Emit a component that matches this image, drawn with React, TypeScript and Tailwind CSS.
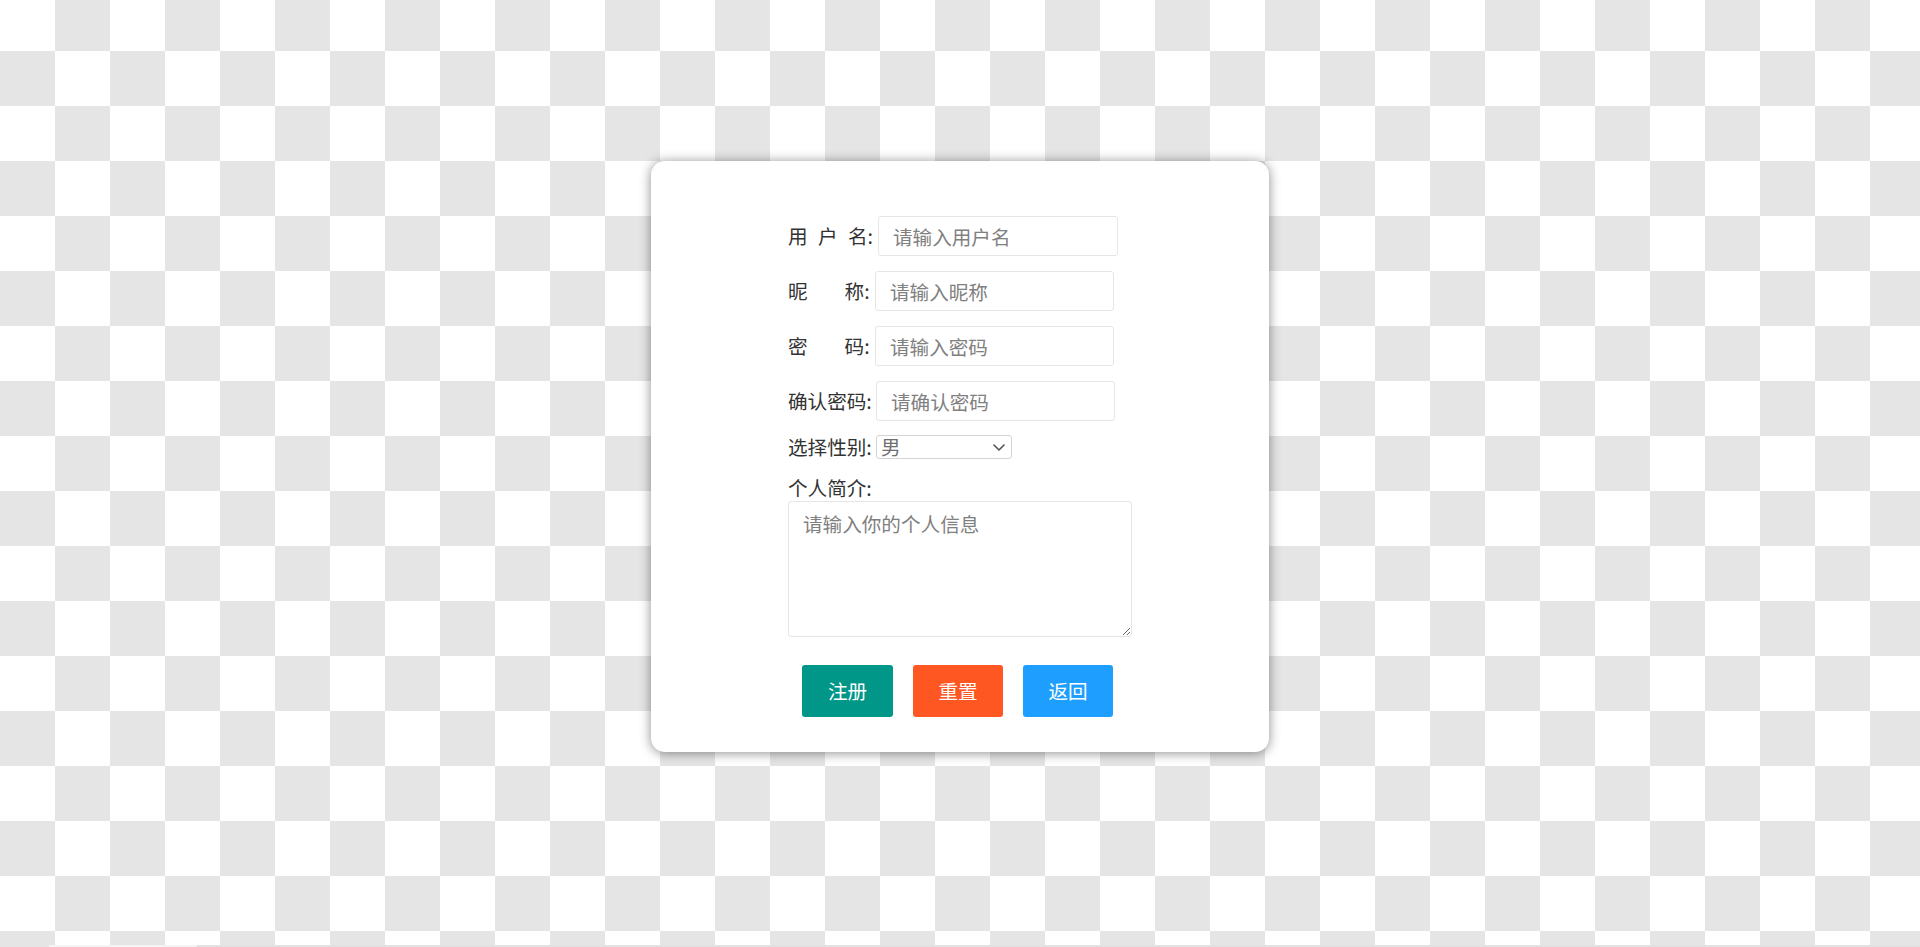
import React from "react";

const font = { fontFamily: '"Noto Sans CJK SC", "Microsoft YaHei", sans-serif' };

export default function App() {
  return (
    <div
      className="relative w-full h-[947px] overflow-hidden pt-[161px] bg-[image:repeating-conic-gradient(#e5e5e5_0_25%,#ffffff_0_50%)] bg-[length:110px_110px] bg-[position:0_-4px]"
      style={font}
    >
      <div className="mx-auto w-[618px] h-[591px] rounded-[14px] bg-white shadow-[0_1px_12px_rgba(0,0,0,0.45)]">
        <form className="mx-auto w-[344px] pt-[55px] text-[19.6px] text-[#333]" onSubmit={(e) => e.preventDefault()}>
          <div className="flex items-center h-[40px]">
            <label className="w-[90px] shrink-0 flex leading-none">
              <span className="mr-[10.4px]">用</span>
              <span className="mr-[10.4px]">户</span>
              <span>名:</span>
            </label>
            <input
              className="w-[240px] h-[40px] border border-[#e6e6e6] rounded-[3px] px-[14px] outline-none text-[19.6px] text-[#333] placeholder:text-[#808080]"
              placeholder="请输入用户名"
            />
          </div>
          <div className="flex items-center h-[40px] mt-[15px]">
            <label className="w-[87px] shrink-0 flex leading-none">
              <span className="mr-[37px]">昵</span>
              <span>称:</span>
            </label>
            <input
              className="w-[239px] h-[40px] border border-[#e6e6e6] rounded-[3px] px-[14px] outline-none text-[19.6px] text-[#333] placeholder:text-[#808080]"
              placeholder="请输入昵称"
            />
          </div>
          <div className="flex items-center h-[40px] mt-[15px]">
            <label className="w-[87px] shrink-0 flex leading-none">
              <span className="mr-[37px]">密</span>
              <span>码:</span>
            </label>
            <input
              type="text"
              className="w-[239px] h-[40px] border border-[#e6e6e6] rounded-[3px] px-[14px] outline-none text-[19.6px] text-[#333] placeholder:text-[#808080]"
              placeholder="请输入密码"
            />
          </div>
          <div className="flex items-center h-[40px] mt-[15px]">
            <label className="w-[88px] shrink-0 leading-none">确认密码:</label>
            <input
              type="text"
              className="w-[239px] h-[40px] border border-[#e6e6e6] rounded-[3px] px-[14px] outline-none text-[19.6px] text-[#333] placeholder:text-[#808080]"
              placeholder="请确认密码"
            />
          </div>
          <div className="flex items-center h-[24px] mt-[14px]">
            <label className="w-[88px] shrink-0 leading-none">选择性别:</label>
            <div className="relative w-[136px] h-[24px]">
              <select
                className="appearance-none block w-full h-[24px] border border-[#d4d4d4] rounded-[3px] pl-[4px] pr-[20px] py-0 text-[19.6px] leading-[22px] text-[#707070] bg-white outline-none"
                style={font}
                defaultValue="男"
              >
                <option>男</option>
                <option>女</option>
              </select>
              <svg
                className="absolute right-[7px] top-[9px] pointer-events-none"
                width="12"
                height="7"
                viewBox="0 0 12 7"
                fill="none"
              >
                <path d="M1 1l5 5 5-5" stroke="#555" strokeWidth="1.6" strokeLinecap="round" strokeLinejoin="round" />
              </svg>
            </div>
          </div>
          <label className="block h-[20px] leading-[20px] mt-[19px]">个人简介:</label>
          <textarea
            className="block w-[344px] h-[136px] mt-[2.5px] border border-[#e6e6e6] rounded-[3px] px-[14px] py-[8px] leading-[28px] text-[19.6px] text-[#333] outline-none resize placeholder:text-[#808080]"
            style={font}
            placeholder="请输入你的个人信息"
          />
          <div className="flex gap-[20px] ml-[14px] mt-[28px]">
            <button type="submit" className="w-[91px] h-[52px] rounded-[3px] bg-[#009688] text-white text-[19.6px] leading-none">
              注册
            </button>
            <button type="reset" className="w-[90px] h-[52px] rounded-[3px] bg-[#FF5722] text-white text-[19.6px] leading-none">
              重置
            </button>
            <button type="button" className="w-[90px] h-[52px] rounded-[3px] bg-[#1E9FFF] text-white text-[19.6px] leading-none">
              返回
            </button>
          </div>
        </form>
      </div>
      <div className="absolute left-[49px] right-0 bottom-0 h-[2px] flex">
        <div className="w-[148px] bg-[#f4f4f4]" />
        <div className="flex-1 bg-[#e2e2e2]" />
      </div>
    </div>
  );
}
